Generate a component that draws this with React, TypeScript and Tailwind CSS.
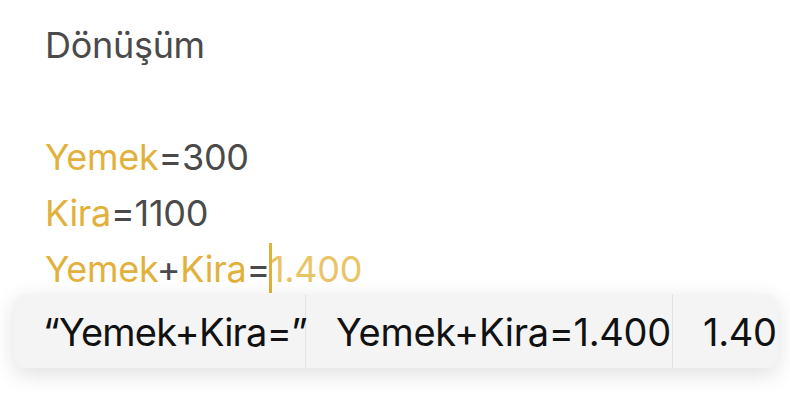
import React from "react";

const gold = "text-[#e2b13c]";

export default function App() {
  return (
    <div className="h-[404px] w-[790px] overflow-hidden bg-white font-['Inter','Liberation_Sans',sans-serif]">
      {/* NOTE BODY */}
      <div className="pl-[45px] pt-[17px] text-[36px] leading-[56px] text-[#4a4a4a] tracking-[-0.3px]">
        <div>Dönüşüm</div>
        <div>&nbsp;</div>
        <div>
          <span className={gold}>Yemek</span>=300
        </div>
        <div>
          <span className={gold}>Kira</span>=1100
        </div>
        <div>
          <span className={gold}>Yemek</span>+<span className={gold}>Kira</span>=
          <span className="relative inline-block w-0">
            <span className="absolute left-[-1px] top-[-39px] h-[50px] w-[3px] bg-[#e2b13c]" />
          </span>
          <span className="text-[#e9c466]">1.400</span>
        </div>
      </div>

      {/* SUGGESTION BAR */}
      <div className="relative ml-[14px] mr-[12px] mt-[-3px] flex h-[74px] overflow-hidden rounded-[12px] bg-[#f4f4f4] shadow-[0_6px_22px_rgba(0,0,0,0.13)] text-[38px] leading-[74px] text-[#111] tracking-[-0.3px]">
        <div className="w-[292px] shrink-0 whitespace-nowrap border-r border-[#e2e2e2] pl-[29px] pt-[1px] tracking-[-0.8px]">
          “Yemek+Kira=”
        </div>
        <div className="w-[367px] shrink-0 whitespace-nowrap border-r border-[#e2e2e2] pl-[30px] pt-[1px]">
          Yemek+Kira=1.400
        </div>
        <div className="shrink-0 whitespace-nowrap pl-[30px] pt-[1px]">1.400</div>
      </div>
    </div>
  );
}
